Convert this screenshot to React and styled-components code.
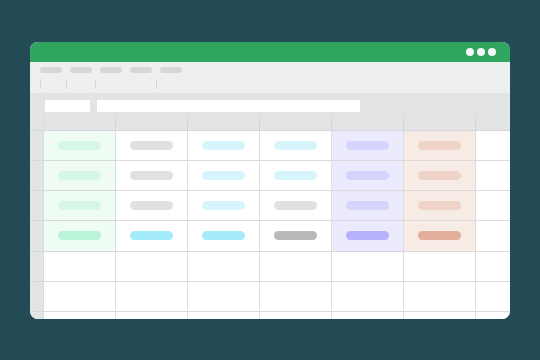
import React from "react";
import styled, { createGlobalStyle } from "styled-components";

const GlobalStyle = createGlobalStyle`
  html, body {
    margin: 0;
    padding: 0;
    background: #234b55;
    font-family: "Liberation Sans", Arial, sans-serif;
  }
`;

const Page = styled.div`
  width: 540px;
  height: 360px;
  display: flex;
  align-items: center;
  justify-content: center;
  background: #234b55;
`;

const Window = styled.div`
  width: 480px;
  height: 277px;
  border-radius: 8px;
  overflow: hidden;
  background: #ffffff;
  display: flex;
  flex-direction: column;
`;

const TitleBar = styled.div`
  height: 20px;
  flex-shrink: 0;
  background: #2fa55f;
  display: flex;
  align-items: center;
  justify-content: flex-end;
  gap: 3px;
  padding-right: 14px;
`;

const Dot = styled.span`
  width: 8px;
  height: 8px;
  border-radius: 50%;
  background: #f4f7f5;
`;

const Toolbar = styled.div`
  height: 31px;
  flex-shrink: 0;
  background: #eef0ef;
  padding: 5px 0 0 10px;
  box-sizing: border-box;
`;

const MenuRow = styled.div`
  display: flex;
  gap: 8px;
`;

const MenuPill = styled.span`
  width: 22px;
  height: 6px;
  border-radius: 3px;
  background: #d6d7d7;
`;

const ToolRow = styled.div`
  display: flex;
  margin-top: 7px;
  height: 9px;
`;

const Sep = styled.span`
  width: 1px;
  height: 9px;
  background: #d6d7d7;
  margin-left: ${(p) => p.$offset}px;
`;

const FormulaBar = styled.div`
  height: 21px;
  flex-shrink: 0;
  background: #e3e4e5;
  display: flex;
  gap: 7px;
  padding: 7px 0 0 15px;
  box-sizing: border-box;
`;

const Field = styled.div`
  width: ${(p) => p.$w}px;
  height: 12px;
  background: #ffffff;
`;

const Grid = styled.div`
  display: grid;
  grid-template-columns: 14px repeat(7, 72px);
  grid-template-rows: 17px 30px 30px 30px 31px 30px 30px 30px;
`;

const Corner = styled.div`
  background: #e3e4e5;
  border-right: 1px solid #d9dadb;
  border-bottom: 1px solid #d9dadb;
  box-sizing: border-box;
`;

const ColHead = styled.div`
  background: #e3e4e5;
  border-right: 1px solid #d6d7d8;
  border-bottom: 1px solid #d6d7d8;
  box-sizing: border-box;
`;

const RowHead = styled.div`
  background: #e3e4e5;
  border-right: 1px solid #d9dadb;
  border-bottom: 1px solid #d9d9d9;
  box-sizing: border-box;
`;

const Cell = styled.div`
  background: ${(p) => p.$bg || "#ffffff"};
  border-right: 1px solid #dedede;
  border-bottom: 1px solid #dadada;
  box-sizing: border-box;
  display: flex;
  align-items: center;
  justify-content: center;
`;

const Chip = styled.span`
  width: 43px;
  height: 9px;
  border-radius: 5px;
  background: ${(p) => p.$color};
`;

const columns = [
  { bg: "#effcf4", chips: ["#d6f7e8", "#d6f7e8", "#d6f7e8", "#b9f4d6"] },
  { bg: null, chips: ["#e1e1e1", "#e1e1e1", "#e1e1e1", "#a4ecfc"] },
  { bg: null, chips: ["#d6f5fd", "#d6f5fd", "#d6f5fd", "#a4ecfc"] },
  { bg: null, chips: ["#d6f5fd", "#d6f5fd", "#e1e1e1", "#b9b9b9"] },
  { bg: "#ecebfd", chips: ["#d6d3fd", "#d6d3fd", "#d6d3fd", "#b5b1fd"] },
  { bg: "#f6ebe5", chips: ["#efd3c8", "#efd3c8", "#efd3c8", "#e3af9a"] },
  { bg: null, chips: [] },
];

const totalRows = 7;

export default function App() {
  return (
    <>
      <GlobalStyle />
      <Page>
        <Window>
          <TitleBar>
            <Dot />
            <Dot />
            <Dot />
          </TitleBar>
          <Toolbar>
            <MenuRow>
              {[0, 1, 2, 3, 4].map((i) => (
                <MenuPill key={i} />
              ))}
            </MenuRow>
            <ToolRow>
              <Sep $offset={0} />
              <Sep $offset={25} />
              <Sep $offset={28} />
              <Sep $offset={60} />
            </ToolRow>
          </Toolbar>
          <FormulaBar>
            <Field $w={45} />
            <Field $w={263} />
          </FormulaBar>
          <Grid>
            <Corner />
            {columns.map((_, i) => (
              <ColHead key={i} />
            ))}
            {Array.from({ length: totalRows }).map((_, r) => (
              <React.Fragment key={r}>
                <RowHead />
                {columns.map((col, c) => {
                  const chip = col.chips[r];
                  return (
                    <Cell key={c} $bg={r < 4 ? col.bg : null}>
                      {chip && <Chip $color={chip} />}
                    </Cell>
                  );
                })}
              </React.Fragment>
            ))}
          </Grid>
        </Window>
      </Page>
    </>
  );
}
